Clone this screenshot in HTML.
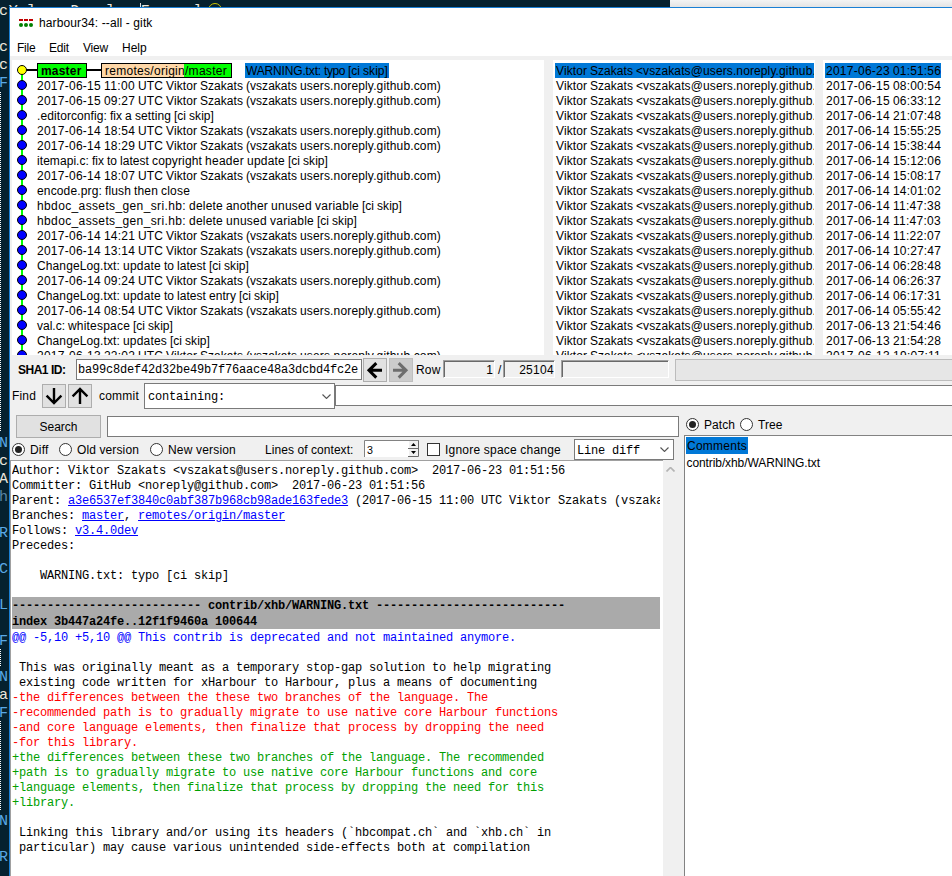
<!DOCTYPE html>
<html lang="en">
<head>
<meta charset="utf-8">
<title>harbour34: --all - gitk</title>
<style>
*{box-sizing:border-box;margin:0;padding:0}
html,body{width:952px;height:876px;overflow:hidden}
body{position:relative;background:#05212f;font-family:"Liberation Sans",sans-serif;font-size:12px;color:#000}
.abs{position:absolute}
.t{position:absolute;white-space:pre;line-height:15px;height:15px}
/* terminal behind */
.term{position:absolute;left:-1px;font-family:"Liberation Mono",monospace;font-size:15px;line-height:18px;height:18px;color:#d8d8d8;white-space:pre}
/* window */
#win{position:absolute;left:9px;top:7px;width:960px;height:900px;background:#fff;border-left:1px solid #1a7fd4;border-top:1px solid #1a7fd4}
#grey{position:absolute;left:10px;top:56px;width:942px;height:820px;background:#f0f0f0}
.pane{position:absolute;background:#fff;overflow:hidden}
.row{position:absolute;left:0;white-space:pre;height:15px;line-height:17px;font-size:12px}
.sel{background:#0078d7}
.w{display:inline-block;white-space:pre;vertical-align:top}
.dot{position:absolute;width:10px;height:10px;border-radius:50%;background:#0000ff;border:1px solid #000;left:6px}
.tag{position:absolute;top:3px;height:15px;border:1px solid #000;font-size:12px;line-height:15px;white-space:pre}
/* controls */
.entry{position:absolute;background:#fff;border:1px solid #7a7a7a}
.btn{position:absolute;background:#e1e1e1;border:1px solid #adadad}
.lbl{position:absolute;white-space:pre;line-height:16px;height:16px;font-size:12px}
.radio{position:absolute;width:13px;height:13px;border-radius:50%;border:1px solid #333;background:#fff}
.radio.on::after{content:"";position:absolute;left:2px;top:2px;width:7px;height:7px;border-radius:50%;background:#222}
.mono{font-family:"Liberation Mono",monospace}
/* diff */
#diff{position:absolute;left:10px;top:460px;width:653px;height:420px;background:#fff;overflow:hidden;border-top:1px solid #a0a0a0}
.dl{position:absolute;left:0;white-space:pre;font-family:"Liberation Mono",monospace;font-size:12px;letter-spacing:-0.2px;line-height:15px;padding-top:2px;height:17px;color:#000}
.dl a{color:#0000ff;text-decoration:underline}
.red{color:#ff0000}.grn{color:#00a000}.blu{color:#0000ff}
</style>
</head>
<body>
<!-- background terminal fragments -->
<div class="term" style="top:3px;color:#ebe6dc">c</div>
<div class="term" style="top:39px;color:#ebe6dc">c</div>
<div class="term" style="top:57px;color:#ebe6dc">c</div>
<div class="term" style="top:75px;color:#5aa9e6">F</div>
<div class="term" style="top:435px;color:#5aa9e6">N</div>
<div class="term" style="top:453px;color:#ebe6dc">c</div>
<div class="term" style="top:471px;color:#ebe6dc">A</div>
<div class="term" style="top:489px;color:#5a86a6">h</div>
<div class="term" style="top:525px;color:#5aa9e6">R</div>
<div class="term" style="top:561px;color:#5aa9e6">C</div>
<div class="term" style="top:597px;color:#5aa9e6">L</div>
<div class="term" style="top:633px;color:#5aa9e6">F</div>
<div class="term" style="top:669px;color:#5aa9e6">N</div>
<div class="term" style="top:687px;color:#ebe6dc">a</div>
<div class="term" style="top:705px;color:#5aa9e6">F</div>
<div class="term" style="top:813px;color:#5aa9e6">N</div>
<div class="term" style="top:849px;color:#5aa9e6">R</div>
<div class="term" style="top:3px;left:8.8px;color:#ebe6dc">Y</div>
<div class="term" style="top:3px;left:26.4px;color:#ebe6dc">]</div>
<div class="term" style="top:3px;left:70.4px;color:#ebe6dc">D</div>
<div class="term" style="top:3px;left:105.6px;color:#ebe6dc">]</div>
<div class="term" style="top:3px;left:140.8px;color:#ebe6dc">F</div>
<div class="term" style="top:3px;left:193.6px;color:#ebe6dc">l</div>
<div class="abs" style="left:140px;top:3px;width:1px;height:5px;background:#ddd"></div>
<div class="abs" style="left:208px;top:3px;width:14px;height:14px;border:1.3px solid #c8c400;border-radius:50%"></div>
<div class="abs" style="left:0;top:92px;width:1px;height:340px;background:repeating-linear-gradient(#fff 0 1px,transparent 1px 2px)"></div>
<div class="abs" style="left:0;top:649px;width:1px;height:18px;background:repeating-linear-gradient(#fff 0 1px,transparent 1px 2px)"></div>
<div class="abs" style="left:0;top:721px;width:1px;height:89px;background:repeating-linear-gradient(#fff 0 1px,transparent 1px 2px)"></div>
<div class="abs" style="left:670px;top:0;width:282px;height:7px;background:linear-gradient(#f4f4f4,#e3e3e3)"></div>

<div id="win"></div>
<!-- title bar -->
<svg class="abs" style="left:19px;top:18px" width="15" height="10" viewBox="0 0 15 10">
 <rect x="0" y="1" width="4" height="2" fill="#c00000"/><rect x="5" y="1" width="4" height="2" fill="#c00000"/><rect x="10" y="1" width="4" height="2" fill="#c00000"/>
 <circle cx="2" cy="7" r="2" fill="#008000"/><circle cx="7" cy="7" r="2" fill="#008000"/><circle cx="12" cy="7" r="2" fill="#008000"/>
</svg>
<div class="lbl g" style="left:39px;top:15px;letter-spacing:0.126px;word-spacing:-0.043px">harbour34: --all - gitk</div>
<!-- menu -->
<div class="lbl g" style="left:17px;top:40px;letter-spacing:-0.209px">File</div><div class="lbl g" style="left:49px;top:40px;letter-spacing:-0.173px">Edit</div><div class="lbl g" style="left:83px;top:40px;letter-spacing:-0.202px">View</div><div class="lbl g" style="left:122px;top:40px;letter-spacing:0.002px">Help</div>

<div id="grey"></div>

<!-- PANES -->
<div class="pane" id="p1" style="left:12px;top:60px;width:532px;height:295px">
<div class="abs" style="left:-1px;top:0">
<div class="abs" style="left:10px;top:10px;width:2px;height:300px;background:#00ff00"></div>
<div class="abs" style="left:11px;top:9px;width:26px;height:2px;background:#000"></div>
<div class="abs" style="left:76px;top:9px;width:14px;height:2px;background:#000"></div>
<div class="dot" style="top:5px;background:#ffff00;border-color:#000"></div>
<div class="tag" style="left:26px;width:50px;background:#00ff00;font-weight:bold;padding-left:3px"><span class="g" style="letter-spacing:0.190px">master</span></div>
<div class="tag" style="left:90px;width:131px;background:#00ff00"><span class="abs" style="left:0;top:0;width:82px;height:13px;background:#ffd8a8"></span><span class="g abs" style="left:3px;top:0;letter-spacing:0.283px">remotes/origin/master</span></div>
<div class="abs sel" style="left:234px;top:3px;width:144px;height:15px"></div>
<div class="row" style="top:3px;left:235px"><span class="w g" style="width:78px;letter-spacing:-0.158px">WARNING.txt: </span><span class="w g" style="width:24px;letter-spacing:-0.424px">typo </span><span class="w g" style="width:15px;letter-spacing:0.000px">[ci </span><span class="w g" style="width:25px;letter-spacing:0.065px">skip]</span></div>
<div class="dot" style="top:20px"></div>
<div class="row" style="top:18px;left:26px"><span class="w g" style="width:67px;letter-spacing:0.260px">2017-06-15 </span><span class="w g" style="width:34px;letter-spacing:0.372px">11:00 </span><span class="w g" style="width:28px;letter-spacing:0.107px">UTC </span><span class="w g" style="width:34px;letter-spacing:0.088px">Viktor </span><span class="w g" style="width:46px;letter-spacing:0.043px">Szakats </span><span class="w g" style="width:54px;letter-spacing:0.034px">(vszakats </span><span class="w g" style="width:141px;letter-spacing:0.153px">users.noreply.github.com)</span></div>
<div class="dot" style="top:35px"></div>
<div class="row" style="top:33px;left:26px"><span class="w g" style="width:67px;letter-spacing:0.260px">2017-06-15 </span><span class="w g" style="width:34px;letter-spacing:0.194px">09:27 </span><span class="w g" style="width:28px;letter-spacing:0.107px">UTC </span><span class="w g" style="width:34px;letter-spacing:0.088px">Viktor </span><span class="w g" style="width:46px;letter-spacing:0.043px">Szakats </span><span class="w g" style="width:54px;letter-spacing:0.034px">(vszakats </span><span class="w g" style="width:141px;letter-spacing:0.153px">users.noreply.github.com)</span></div>
<div class="dot" style="top:50px"></div>
<div class="row" style="top:48px;left:26px"><span class="w g" style="width:73px;letter-spacing:0.092px">.editorconfig: </span><span class="w g" style="width:15px;letter-spacing:0.000px">fix </span><span class="w g" style="width:10px;letter-spacing:0.326px">a </span><span class="w g" style="width:39px;letter-spacing:0.092px">setting </span><span class="w g" style="width:15px;letter-spacing:0.000px">[ci </span><span class="w g" style="width:25px;letter-spacing:0.065px">skip]</span></div>
<div class="dot" style="top:65px"></div>
<div class="row" style="top:63px;left:26px"><span class="w g" style="width:67px;letter-spacing:0.260px">2017-06-14 </span><span class="w g" style="width:34px;letter-spacing:0.194px">18:54 </span><span class="w g" style="width:28px;letter-spacing:0.107px">UTC </span><span class="w g" style="width:34px;letter-spacing:0.088px">Viktor </span><span class="w g" style="width:46px;letter-spacing:0.043px">Szakats </span><span class="w g" style="width:54px;letter-spacing:0.034px">(vszakats </span><span class="w g" style="width:141px;letter-spacing:0.153px">users.noreply.github.com)</span></div>
<div class="dot" style="top:80px"></div>
<div class="row" style="top:78px;left:26px"><span class="w g" style="width:67px;letter-spacing:0.260px">2017-06-14 </span><span class="w g" style="width:34px;letter-spacing:0.194px">18:29 </span><span class="w g" style="width:28px;letter-spacing:0.107px">UTC </span><span class="w g" style="width:34px;letter-spacing:0.088px">Viktor </span><span class="w g" style="width:46px;letter-spacing:0.043px">Szakats </span><span class="w g" style="width:54px;letter-spacing:0.034px">(vszakats </span><span class="w g" style="width:141px;letter-spacing:0.153px">users.noreply.github.com)</span></div>
<div class="dot" style="top:95px"></div>
<div class="row" style="top:93px;left:26px"><span class="w g" style="width:55px;letter-spacing:0.063px">itemapi.c: </span><span class="w g" style="width:15px;letter-spacing:0.000px">fix </span><span class="w g" style="width:13px;letter-spacing:-0.004px">to </span><span class="w g" style="width:32px;letter-spacing:0.053px">latest </span><span class="w g" style="width:53px;letter-spacing:0.145px">copyright </span><span class="w g" style="width:42px;letter-spacing:0.272px">header </span><span class="w g" style="width:41px;letter-spacing:0.216px">update </span><span class="w g" style="width:15px;letter-spacing:0.000px">[ci </span><span class="w g" style="width:25px;letter-spacing:0.065px">skip]</span></div>
<div class="dot" style="top:110px"></div>
<div class="row" style="top:108px;left:26px"><span class="w g" style="width:67px;letter-spacing:0.260px">2017-06-14 </span><span class="w g" style="width:34px;letter-spacing:0.194px">18:07 </span><span class="w g" style="width:28px;letter-spacing:0.107px">UTC </span><span class="w g" style="width:34px;letter-spacing:0.088px">Viktor </span><span class="w g" style="width:46px;letter-spacing:0.043px">Szakats </span><span class="w g" style="width:54px;letter-spacing:0.034px">(vszakats </span><span class="w g" style="width:141px;letter-spacing:0.153px">users.noreply.github.com)</span></div>
<div class="dot" style="top:125px"></div>
<div class="row" style="top:123px;left:26px"><span class="w g" style="width:68px;letter-spacing:0.147px">encode.prg: </span><span class="w g" style="width:29px;letter-spacing:0.130px">flush </span><span class="w g" style="width:27px;letter-spacing:0.161px">then </span><span class="w g" style="width:29px;letter-spacing:0.197px">close</span></div>
<div class="dot" style="top:140px"></div>
<div class="row" style="top:138px;left:26px"><span class="w g" style="width:152px;letter-spacing:0.370px">hbdoc_assets_gen_sri.hb: </span><span class="w g" style="width:37px;letter-spacing:0.217px">delete </span><span class="w g" style="width:45px;letter-spacing:0.184px">another </span><span class="w g" style="width:44px;letter-spacing:0.269px">unused </span><span class="w g" style="width:47px;letter-spacing:0.247px">variable </span><span class="w g" style="width:15px;letter-spacing:0.000px">[ci </span><span class="w g" style="width:25px;letter-spacing:0.065px">skip]</span></div>
<div class="dot" style="top:155px"></div>
<div class="row" style="top:153px;left:26px"><span class="w g" style="width:152px;letter-spacing:0.370px">hbdoc_assets_gen_sri.hb: </span><span class="w g" style="width:37px;letter-spacing:0.217px">delete </span><span class="w g" style="width:44px;letter-spacing:0.269px">unused </span><span class="w g" style="width:47px;letter-spacing:0.247px">variable </span><span class="w g" style="width:15px;letter-spacing:0.000px">[ci </span><span class="w g" style="width:25px;letter-spacing:0.065px">skip]</span></div>
<div class="dot" style="top:170px"></div>
<div class="row" style="top:168px;left:26px"><span class="w g" style="width:67px;letter-spacing:0.260px">2017-06-14 </span><span class="w g" style="width:34px;letter-spacing:0.194px">14:21 </span><span class="w g" style="width:28px;letter-spacing:0.107px">UTC </span><span class="w g" style="width:34px;letter-spacing:0.088px">Viktor </span><span class="w g" style="width:46px;letter-spacing:0.043px">Szakats </span><span class="w g" style="width:54px;letter-spacing:0.034px">(vszakats </span><span class="w g" style="width:141px;letter-spacing:0.153px">users.noreply.github.com)</span></div>
<div class="dot" style="top:185px"></div>
<div class="row" style="top:183px;left:26px"><span class="w g" style="width:67px;letter-spacing:0.260px">2017-06-14 </span><span class="w g" style="width:34px;letter-spacing:0.194px">13:14 </span><span class="w g" style="width:28px;letter-spacing:0.107px">UTC </span><span class="w g" style="width:34px;letter-spacing:0.088px">Viktor </span><span class="w g" style="width:46px;letter-spacing:0.043px">Szakats </span><span class="w g" style="width:54px;letter-spacing:0.034px">(vszakats </span><span class="w g" style="width:141px;letter-spacing:0.153px">users.noreply.github.com)</span></div>
<div class="dot" style="top:200px"></div>
<div class="row" style="top:198px;left:26px"><span class="w g" style="width:86px;letter-spacing:0.114px">ChangeLog.txt: </span><span class="w g" style="width:41px;letter-spacing:0.216px">update </span><span class="w g" style="width:13px;letter-spacing:-0.004px">to </span><span class="w g" style="width:32px;letter-spacing:0.053px">latest </span><span class="w g" style="width:15px;letter-spacing:0.000px">[ci </span><span class="w g" style="width:25px;letter-spacing:0.065px">skip]</span></div>
<div class="dot" style="top:215px"></div>
<div class="row" style="top:213px;left:26px"><span class="w g" style="width:67px;letter-spacing:0.260px">2017-06-14 </span><span class="w g" style="width:34px;letter-spacing:0.194px">09:24 </span><span class="w g" style="width:28px;letter-spacing:0.107px">UTC </span><span class="w g" style="width:34px;letter-spacing:0.088px">Viktor </span><span class="w g" style="width:46px;letter-spacing:0.043px">Szakats </span><span class="w g" style="width:54px;letter-spacing:0.034px">(vszakats </span><span class="w g" style="width:141px;letter-spacing:0.153px">users.noreply.github.com)</span></div>
<div class="dot" style="top:230px"></div>
<div class="row" style="top:228px;left:26px"><span class="w g" style="width:86px;letter-spacing:0.114px">ChangeLog.txt: </span><span class="w g" style="width:41px;letter-spacing:0.216px">update </span><span class="w g" style="width:13px;letter-spacing:-0.004px">to </span><span class="w g" style="width:32px;letter-spacing:0.053px">latest </span><span class="w g" style="width:30px;letter-spacing:0.064px">entry </span><span class="w g" style="width:15px;letter-spacing:0.000px">[ci </span><span class="w g" style="width:25px;letter-spacing:0.065px">skip]</span></div>
<div class="dot" style="top:245px"></div>
<div class="row" style="top:243px;left:26px"><span class="w g" style="width:67px;letter-spacing:0.260px">2017-06-14 </span><span class="w g" style="width:34px;letter-spacing:0.194px">08:54 </span><span class="w g" style="width:28px;letter-spacing:0.107px">UTC </span><span class="w g" style="width:34px;letter-spacing:0.088px">Viktor </span><span class="w g" style="width:46px;letter-spacing:0.043px">Szakats </span><span class="w g" style="width:54px;letter-spacing:0.034px">(vszakats </span><span class="w g" style="width:141px;letter-spacing:0.153px">users.noreply.github.com)</span></div>
<div class="dot" style="top:260px"></div>
<div class="row" style="top:258px;left:26px"><span class="w g" style="width:31px;letter-spacing:-0.004px">val.c: </span><span class="w g" style="width:65px;letter-spacing:0.196px">whitespace </span><span class="w g" style="width:15px;letter-spacing:0.000px">[ci </span><span class="w g" style="width:25px;letter-spacing:0.065px">skip]</span></div>
<div class="dot" style="top:275px"></div>
<div class="row" style="top:273px;left:26px"><span class="w g" style="width:86px;letter-spacing:0.114px">ChangeLog.txt: </span><span class="w g" style="width:47px;letter-spacing:0.185px">updates </span><span class="w g" style="width:15px;letter-spacing:0.000px">[ci </span><span class="w g" style="width:25px;letter-spacing:0.065px">skip]</span></div>
<div class="dot" style="top:290px"></div>
<div class="row" style="top:288px;left:26px"><span class="w g" style="width:67px;letter-spacing:0.260px">2017-06-13 </span><span class="w g" style="width:34px;letter-spacing:0.194px">22:02 </span><span class="w g" style="width:28px;letter-spacing:0.107px">UTC </span><span class="w g" style="width:34px;letter-spacing:0.088px">Viktor </span><span class="w g" style="width:46px;letter-spacing:0.043px">Szakats </span><span class="w g" style="width:54px;letter-spacing:0.034px">(vszakats </span><span class="w g" style="width:141px;letter-spacing:0.153px">users.noreply.github.com)</span></div>
</div>
</div>
<div class="pane" id="p2" style="left:553px;top:60px;width:262px;height:295px">
<div class="abs" style="left:0;top:0;width:261px;height:295px;overflow:hidden">
<div class="abs sel" style="left:2px;top:3px;width:259px;height:15px"></div>
<div class="row" style="top:3px;left:3px"><span class="w g" style="width:34px;letter-spacing:0.088px">Viktor </span><span class="w g" style="width:46px;letter-spacing:0.043px">Szakats </span><span class="w g" style="width:210px;letter-spacing:0.113px">&lt;vszakats@users.noreply.github.com&gt;</span></div>
<div class="row" style="top:18px;left:3px"><span class="w g" style="width:34px;letter-spacing:0.088px">Viktor </span><span class="w g" style="width:46px;letter-spacing:0.043px">Szakats </span><span class="w g" style="width:210px;letter-spacing:0.113px">&lt;vszakats@users.noreply.github.com&gt;</span></div>
<div class="row" style="top:33px;left:3px"><span class="w g" style="width:34px;letter-spacing:0.088px">Viktor </span><span class="w g" style="width:46px;letter-spacing:0.043px">Szakats </span><span class="w g" style="width:210px;letter-spacing:0.113px">&lt;vszakats@users.noreply.github.com&gt;</span></div>
<div class="row" style="top:48px;left:3px"><span class="w g" style="width:34px;letter-spacing:0.088px">Viktor </span><span class="w g" style="width:46px;letter-spacing:0.043px">Szakats </span><span class="w g" style="width:210px;letter-spacing:0.113px">&lt;vszakats@users.noreply.github.com&gt;</span></div>
<div class="row" style="top:63px;left:3px"><span class="w g" style="width:34px;letter-spacing:0.088px">Viktor </span><span class="w g" style="width:46px;letter-spacing:0.043px">Szakats </span><span class="w g" style="width:210px;letter-spacing:0.113px">&lt;vszakats@users.noreply.github.com&gt;</span></div>
<div class="row" style="top:78px;left:3px"><span class="w g" style="width:34px;letter-spacing:0.088px">Viktor </span><span class="w g" style="width:46px;letter-spacing:0.043px">Szakats </span><span class="w g" style="width:210px;letter-spacing:0.113px">&lt;vszakats@users.noreply.github.com&gt;</span></div>
<div class="row" style="top:93px;left:3px"><span class="w g" style="width:34px;letter-spacing:0.088px">Viktor </span><span class="w g" style="width:46px;letter-spacing:0.043px">Szakats </span><span class="w g" style="width:210px;letter-spacing:0.113px">&lt;vszakats@users.noreply.github.com&gt;</span></div>
<div class="row" style="top:108px;left:3px"><span class="w g" style="width:34px;letter-spacing:0.088px">Viktor </span><span class="w g" style="width:46px;letter-spacing:0.043px">Szakats </span><span class="w g" style="width:210px;letter-spacing:0.113px">&lt;vszakats@users.noreply.github.com&gt;</span></div>
<div class="row" style="top:123px;left:3px"><span class="w g" style="width:34px;letter-spacing:0.088px">Viktor </span><span class="w g" style="width:46px;letter-spacing:0.043px">Szakats </span><span class="w g" style="width:210px;letter-spacing:0.113px">&lt;vszakats@users.noreply.github.com&gt;</span></div>
<div class="row" style="top:138px;left:3px"><span class="w g" style="width:34px;letter-spacing:0.088px">Viktor </span><span class="w g" style="width:46px;letter-spacing:0.043px">Szakats </span><span class="w g" style="width:210px;letter-spacing:0.113px">&lt;vszakats@users.noreply.github.com&gt;</span></div>
<div class="row" style="top:153px;left:3px"><span class="w g" style="width:34px;letter-spacing:0.088px">Viktor </span><span class="w g" style="width:46px;letter-spacing:0.043px">Szakats </span><span class="w g" style="width:210px;letter-spacing:0.113px">&lt;vszakats@users.noreply.github.com&gt;</span></div>
<div class="row" style="top:168px;left:3px"><span class="w g" style="width:34px;letter-spacing:0.088px">Viktor </span><span class="w g" style="width:46px;letter-spacing:0.043px">Szakats </span><span class="w g" style="width:210px;letter-spacing:0.113px">&lt;vszakats@users.noreply.github.com&gt;</span></div>
<div class="row" style="top:183px;left:3px"><span class="w g" style="width:34px;letter-spacing:0.088px">Viktor </span><span class="w g" style="width:46px;letter-spacing:0.043px">Szakats </span><span class="w g" style="width:210px;letter-spacing:0.113px">&lt;vszakats@users.noreply.github.com&gt;</span></div>
<div class="row" style="top:198px;left:3px"><span class="w g" style="width:34px;letter-spacing:0.088px">Viktor </span><span class="w g" style="width:46px;letter-spacing:0.043px">Szakats </span><span class="w g" style="width:210px;letter-spacing:0.113px">&lt;vszakats@users.noreply.github.com&gt;</span></div>
<div class="row" style="top:213px;left:3px"><span class="w g" style="width:34px;letter-spacing:0.088px">Viktor </span><span class="w g" style="width:46px;letter-spacing:0.043px">Szakats </span><span class="w g" style="width:210px;letter-spacing:0.113px">&lt;vszakats@users.noreply.github.com&gt;</span></div>
<div class="row" style="top:228px;left:3px"><span class="w g" style="width:34px;letter-spacing:0.088px">Viktor </span><span class="w g" style="width:46px;letter-spacing:0.043px">Szakats </span><span class="w g" style="width:210px;letter-spacing:0.113px">&lt;vszakats@users.noreply.github.com&gt;</span></div>
<div class="row" style="top:243px;left:3px"><span class="w g" style="width:34px;letter-spacing:0.088px">Viktor </span><span class="w g" style="width:46px;letter-spacing:0.043px">Szakats </span><span class="w g" style="width:210px;letter-spacing:0.113px">&lt;vszakats@users.noreply.github.com&gt;</span></div>
<div class="row" style="top:258px;left:3px"><span class="w g" style="width:34px;letter-spacing:0.088px">Viktor </span><span class="w g" style="width:46px;letter-spacing:0.043px">Szakats </span><span class="w g" style="width:210px;letter-spacing:0.113px">&lt;vszakats@users.noreply.github.com&gt;</span></div>
<div class="row" style="top:273px;left:3px"><span class="w g" style="width:34px;letter-spacing:0.088px">Viktor </span><span class="w g" style="width:46px;letter-spacing:0.043px">Szakats </span><span class="w g" style="width:210px;letter-spacing:0.113px">&lt;vszakats@users.noreply.github.com&gt;</span></div>
<div class="row" style="top:288px;left:3px"><span class="w g" style="width:34px;letter-spacing:0.088px">Viktor </span><span class="w g" style="width:46px;letter-spacing:0.043px">Szakats </span><span class="w g" style="width:210px;letter-spacing:0.113px">&lt;vszakats@users.noreply.github.com&gt;</span></div>
</div>
</div>
<div class="pane" id="p3" style="left:823px;top:60px;width:129px;height:295px">
<div class="abs sel" style="left:2px;top:3px;width:116px;height:15px"></div>
<div class="row" style="top:3px;left:3px"><span class="w g" style="width:67px;letter-spacing:0.260px">2017-06-23 </span><span class="w g" style="width:48px;letter-spacing:0.161px">01:51:56</span></div>
<div class="row" style="top:18px;left:3px"><span class="w g" style="width:67px;letter-spacing:0.260px">2017-06-15 </span><span class="w g" style="width:48px;letter-spacing:0.161px">08:00:54</span></div>
<div class="row" style="top:33px;left:3px"><span class="w g" style="width:67px;letter-spacing:0.260px">2017-06-15 </span><span class="w g" style="width:48px;letter-spacing:0.161px">06:33:12</span></div>
<div class="row" style="top:48px;left:3px"><span class="w g" style="width:67px;letter-spacing:0.260px">2017-06-14 </span><span class="w g" style="width:48px;letter-spacing:0.161px">21:07:48</span></div>
<div class="row" style="top:63px;left:3px"><span class="w g" style="width:67px;letter-spacing:0.260px">2017-06-14 </span><span class="w g" style="width:48px;letter-spacing:0.161px">15:55:25</span></div>
<div class="row" style="top:78px;left:3px"><span class="w g" style="width:67px;letter-spacing:0.260px">2017-06-14 </span><span class="w g" style="width:48px;letter-spacing:0.161px">15:38:44</span></div>
<div class="row" style="top:93px;left:3px"><span class="w g" style="width:67px;letter-spacing:0.260px">2017-06-14 </span><span class="w g" style="width:48px;letter-spacing:0.161px">15:12:06</span></div>
<div class="row" style="top:108px;left:3px"><span class="w g" style="width:67px;letter-spacing:0.260px">2017-06-14 </span><span class="w g" style="width:48px;letter-spacing:0.161px">15:08:17</span></div>
<div class="row" style="top:123px;left:3px"><span class="w g" style="width:67px;letter-spacing:0.260px">2017-06-14 </span><span class="w g" style="width:48px;letter-spacing:0.161px">14:01:02</span></div>
<div class="row" style="top:138px;left:3px"><span class="w g" style="width:67px;letter-spacing:0.260px">2017-06-14 </span><span class="w g" style="width:48px;letter-spacing:0.272px">11:47:38</span></div>
<div class="row" style="top:153px;left:3px"><span class="w g" style="width:67px;letter-spacing:0.260px">2017-06-14 </span><span class="w g" style="width:48px;letter-spacing:0.272px">11:47:03</span></div>
<div class="row" style="top:168px;left:3px"><span class="w g" style="width:67px;letter-spacing:0.260px">2017-06-14 </span><span class="w g" style="width:48px;letter-spacing:0.272px">11:22:07</span></div>
<div class="row" style="top:183px;left:3px"><span class="w g" style="width:67px;letter-spacing:0.260px">2017-06-14 </span><span class="w g" style="width:48px;letter-spacing:0.161px">10:27:47</span></div>
<div class="row" style="top:198px;left:3px"><span class="w g" style="width:67px;letter-spacing:0.260px">2017-06-14 </span><span class="w g" style="width:48px;letter-spacing:0.161px">06:28:48</span></div>
<div class="row" style="top:213px;left:3px"><span class="w g" style="width:67px;letter-spacing:0.260px">2017-06-14 </span><span class="w g" style="width:48px;letter-spacing:0.161px">06:26:37</span></div>
<div class="row" style="top:228px;left:3px"><span class="w g" style="width:67px;letter-spacing:0.260px">2017-06-14 </span><span class="w g" style="width:48px;letter-spacing:0.161px">06:17:31</span></div>
<div class="row" style="top:243px;left:3px"><span class="w g" style="width:67px;letter-spacing:0.260px">2017-06-14 </span><span class="w g" style="width:48px;letter-spacing:0.161px">05:55:42</span></div>
<div class="row" style="top:258px;left:3px"><span class="w g" style="width:67px;letter-spacing:0.260px">2017-06-13 </span><span class="w g" style="width:48px;letter-spacing:0.161px">21:54:46</span></div>
<div class="row" style="top:273px;left:3px"><span class="w g" style="width:67px;letter-spacing:0.260px">2017-06-13 </span><span class="w g" style="width:48px;letter-spacing:0.161px">21:54:28</span></div>
<div class="row" style="top:288px;left:3px"><span class="w g" style="width:67px;letter-spacing:0.260px">2017-06-13 </span><span class="w g" style="width:48px;letter-spacing:0.272px">19:07:11</span></div>
</div>

<div class="lbl g" style="left:18px;top:362px;letter-spacing:-0.513px;word-spacing:0.264px;font-weight:bold">SHA1 ID:</div>
<div class="entry mono" style="left:76px;top:359px;width:286px;height:21px;font-size:12px;letter-spacing:-0.2px;line-height:21px;padding-left:1px;white-space:pre">ba99c8def42d32be49b7f76aace48a3dcbd4fc2e</div>
<div class="btn" style="left:363px;top:358px;width:24px;height:24px"></div>
<div class="btn" style="left:389px;top:358px;width:24px;height:24px;background:#cccccc;border-color:#bfbfbf"></div>
<svg class="abs" style="left:363px;top:358px" width="24" height="24" viewBox="0 0 24 24"><g fill="none" stroke="#000" stroke-width="3" stroke-linecap="butt" stroke-linejoin="miter"><path d="M5.5 12.3H19M13.3 5.2L6 12.3L13.3 19.6"/></g></svg>
<svg class="abs" style="left:388px;top:358px" width="24" height="24" viewBox="0 0 24 24"><g transform="translate(24 0) scale(-1 1)" fill="none" stroke="#6d6d6d" stroke-width="3" stroke-linecap="butt" stroke-linejoin="miter"><path d="M5.5 12.3H19M13.3 5.2L6 12.3L13.3 19.6"/></g></svg>
<div class="lbl g" style="left:416px;top:362px;letter-spacing:0.160px">Row</div>
<div class="abs" style="left:443px;top:360px;width:52px;height:18px;background:#f0f0f0;border:1px solid #fff;border-top-color:#a0a0a0;border-left-color:#a0a0a0;box-shadow:inset 1px 1px 0 #696969;text-align:right;padding-right:1px;line-height:18px;font-size:12px;letter-spacing:0px">1</div>
<div class="lbl" style="left:498px;top:362px">/</div>
<div class="abs" style="left:503px;top:360px;width:52px;height:18px;background:#f0f0f0;border:1px solid #fff;border-top-color:#a0a0a0;border-left-color:#a0a0a0;box-shadow:inset 1px 1px 0 #696969;text-align:right;padding-right:0px;line-height:18px;font-size:12px;letter-spacing:0.3px">25104</div>
<div class="abs" style="left:561px;top:360px;width:108px;height:18px;background:#f0f0f0;border:1px solid #fff;border-top-color:#a0a0a0;border-left-color:#a0a0a0;box-shadow:inset 1px 1px 0 #696969;text-align:right;padding-right:1px;line-height:18px;font-size:12px;letter-spacing:0px"></div>
<div class="abs" style="left:675px;top:359px;width:290px;height:22px;background:#e6e6e6;border:1px solid #bcbcbc"></div>
<div class="entry" style="left:335px;top:385px;width:640px;height:21px;border-color:#7a7a7a"></div>
<div class="lbl g" style="left:12px;top:388px;letter-spacing:0.164px">Find</div>
<div class="btn" style="left:42px;top:384px;width:24px;height:24px"></div>
<div class="btn" style="left:68px;top:384px;width:24px;height:24px"></div>
<svg class="abs" style="left:42px;top:384px" width="24" height="24" viewBox="0 0 24 24"><g fill="none" stroke="#000" stroke-width="2.4" stroke-linecap="butt" stroke-linejoin="miter"><path d="M12 4V19M4.6 11.6L12 19L19.4 11.6"/></g></svg>
<svg class="abs" style="left:68px;top:384px" width="24" height="24" viewBox="0 0 24 24"><g transform="translate(0 24) scale(1 -1)" fill="none" stroke="#000" stroke-width="2.4" stroke-linecap="butt" stroke-linejoin="miter"><path d="M12 4V19M4.6 11.6L12 19L19.4 11.6"/></g></svg>
<div class="lbl g" style="left:99px;top:388px;letter-spacing:0.222px">commit</div>
<div class="entry mono" style="left:144px;top:383px;width:191px;height:26px;font-size:12px;letter-spacing:-0.2px;line-height:26px;padding-left:3px;white-space:pre">containing:</div>
<svg class="abs" style="left:321.5px;top:394.3px" width="9" height="5" viewBox="0 0 9 5"><path d="M0.5 0.5L4.5 4.5L8.5 0.5" fill="none" stroke="#555" stroke-width="1.1"/></svg>
<div class="btn" style="left:16px;top:415px;width:85px;height:23px;text-align:center;line-height:22px;font-size:12px">Search</div>
<div class="entry" style="left:107px;top:416px;width:572px;height:21px"></div>
<div class="radio on" style="left:686px;top:418px"></div>
<div class="lbl g" style="left:704px;top:417px;letter-spacing:0.060px">Patch</div>
<div class="radio" style="left:740px;top:418px"></div>
<div class="lbl g" style="left:758px;top:417px;letter-spacing:0.066px">Tree</div>
<div class="radio on" style="left:12px;top:443px"></div>
<div class="lbl g" style="left:30px;top:442px;letter-spacing:0.176px">Diff</div>
<div class="radio" style="left:59px;top:443px"></div>
<div class="lbl g" style="left:77px;top:442px;letter-spacing:0.122px;word-spacing:-0.052px">Old version</div>
<div class="radio" style="left:150px;top:443px"></div>
<div class="lbl g" style="left:168px;top:442px;letter-spacing:0.186px;word-spacing:-0.088px">New version</div>
<div class="lbl g" style="left:265px;top:442px;letter-spacing:0.068px;word-spacing:-0.026px">Lines of context:</div>
<svg class="abs" style="left:364px;top:440px" width="55" height="18" viewBox="0 0 55 18"><rect x="0" y="0" width="55" height="17" fill="#fff"/><rect x="45" y="1" width="9" height="15" fill="#f0f0f0"/><path d="M0.5 17V0.5H55" fill="none" stroke="#828282" stroke-width="1"/><path d="M54.5 1V16.5H44M44 8.5H54" fill="none" stroke="#696969" stroke-width="1"/><path d="M47 6L49.5 3L52 6ZM47 11L49.5 14L52 11Z" fill="#000"/></svg>
<div class="lbl" style="left:367px;top:442px;font-size:10.67px">3</div>
<div class="abs" style="left:427px;top:443px;width:13px;height:13px;background:#fff;border:1px solid #333"></div>
<div class="lbl g" style="left:445px;top:442px;letter-spacing:0.216px;word-spacing:-0.100px">Ignore space change</div>
<div class="entry mono" style="left:574px;top:439px;width:100px;height:21px;font-size:12px;letter-spacing:-0.2px;line-height:22px;padding-left:2px;white-space:pre">Line diff</div>
<svg class="abs" style="left:660px;top:447px" width="9" height="5" viewBox="0 0 9 5"><path d="M0.5 0.5L4.5 4.5L8.5 0.5" fill="none" stroke="#555" stroke-width="1.1"/></svg>
<div id="diff">
<div class="abs" style="left:0;top:0;width:1px;height:420px;background:#a0a0a0"></div>
<div class="abs" style="left:2px;top:0;width:648px;height:420px;overflow:hidden">
<div class="abs" style="left:0;top:136px;width:648px;height:32px;background:#aaaaaa"></div>
<div class="dl " style="top:1px">Author: Viktor Szakats &lt;vszakats@users.noreply.github.com&gt;  2017-06-23 01:51:56</div>
<div class="dl " style="top:16px">Committer: GitHub &lt;noreply@github.com&gt;  2017-06-23 01:51:56</div>
<div class="dl " style="top:31px">Parent: <a>a3e6537ef3840c0abf387b968cb98ade163fede3</a> (2017-06-15 11:00 UTC Viktor Szakats (vszakats users.noreply.github.com))</div>
<div class="dl " style="top:46px">Branches: <a>master</a>, <a>remotes/origin/master</a></div>
<div class="dl " style="top:61px">Follows: <a>v3.4.0dev</a></div>
<div class="dl " style="top:76px">Precedes:</div>
<div class="dl " style="top:91px"></div>
<div class="dl " style="top:106px">    WARNING.txt: typo [ci skip]</div>
<div class="dl " style="top:121px"></div>
<div class="dl " style="top:136px;font-weight:bold">--------------------------- contrib/xhb/WARNING.txt ---------------------------</div>
<div class="dl " style="top:152px;font-weight:bold">index 3b447a24fe..12f1f9460a 100644</div>
<div class="dl blu" style="top:168px">@@ -5,10 +5,10 @@ This contrib is deprecated and not maintained anymore.</div>
<div class="dl " style="top:183px"></div>
<div class="dl " style="top:198px"> This was originally meant as a temporary stop-gap solution to help migrating</div>
<div class="dl " style="top:213px"> existing code written for xHarbour to Harbour, plus a means of documenting</div>
<div class="dl red" style="top:228px">-the differences between the these two branches of the language. The</div>
<div class="dl red" style="top:243px">-recommended path is to gradually migrate to use native core Harbour functions</div>
<div class="dl red" style="top:258px">-and core language elements, then finalize that process by dropping the need</div>
<div class="dl red" style="top:273px">-for this library.</div>
<div class="dl grn" style="top:288px">+the differences between these two branches of the language. The recommended</div>
<div class="dl grn" style="top:303px">+path is to gradually migrate to use native core Harbour functions and core</div>
<div class="dl grn" style="top:318px">+language elements, then finalize that process by dropping the need for this</div>
<div class="dl grn" style="top:333px">+library.</div>
<div class="dl " style="top:348px"></div>
<div class="dl " style="top:363px"> Linking this library and/or using its headers (`hbcompat.ch` and `xhb.ch` in</div>
<div class="dl " style="top:378px"> particular) may cause various unintended side-effects both at compilation</div>
</div>
</div>
<div class="abs" style="left:663px;top:460px;width:21px;height:420px;background:#f0f0f0"></div>
<svg class="abs" style="left:666px;top:467px" width="9" height="5" viewBox="0 0 9 5"><path d="M0.5 4.5L4.5 0.5L8.5 4.5" fill="none" stroke="#b4b4b4" stroke-width="1.7"/></svg>
<div class="abs" style="left:684px;top:435px;width:280px;height:450px;background:#fff;border-left:1px solid #828282;border-top:1px solid #828282"></div>
<div class="abs" style="left:686px;top:437px;width:62px;height:17px;background:#0078d7"></div>
<div class="lbl g" style="left:687px;top:438px;letter-spacing:0.248px;line-height:17px;height:17px">Comments</div>
<div class="lbl g" style="left:686.5px;top:455px;letter-spacing:-0.091px;line-height:17px;height:17px">contrib/xhb/WARNING.txt</div>
</body>
</html>
